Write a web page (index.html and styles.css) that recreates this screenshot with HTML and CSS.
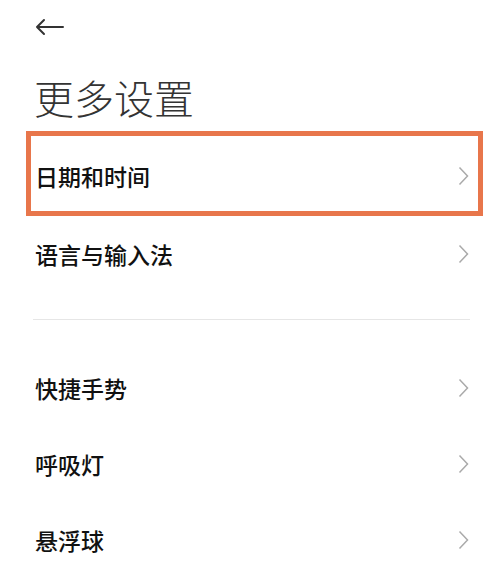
FILE: index.html
```html
<!DOCTYPE html>
<html lang="zh-CN">
<head>
    <meta charset="UTF-8">
    <title>更多设置</title>
    <link rel="stylesheet" href="styles.css">
</head>
<body>
<div class="page">
    <div class="topbar">
        <svg class="back" width="30" height="18" viewBox="0 0 30 18">
            <path d="M2 9 H28 M9 2 L2 9 L9 16" fill="none" stroke="#333" stroke-width="2" stroke-linecap="round" stroke-linejoin="round"/>
        </svg>
    </div>
    <h1 class="title">更多设置</h1>

    <div class="row selected">
        <span class="label">日期和时间</span>
        <svg class="chev" width="11" height="20" viewBox="0 0 11 20"><polyline points="1.5,1.5 9.5,10 1.5,18.5" fill="none" stroke="#aaa" stroke-width="1.5"/></svg>
    </div>
    <div class="row">
        <span class="label">语言与输入法</span>
        <svg class="chev" width="11" height="20" viewBox="0 0 11 20"><polyline points="1.5,1.5 9.5,10 1.5,18.5" fill="none" stroke="#aaa" stroke-width="1.5"/></svg>
    </div>

    <hr class="divider"/>

    <div class="row">
        <span class="label">快捷手势</span>
        <svg class="chev" width="11" height="20" viewBox="0 0 11 20"><polyline points="1.5,1.5 9.5,10 1.5,18.5" fill="none" stroke="#aaa" stroke-width="1.5"/></svg>
    </div>
    <div class="row">
        <span class="label">呼吸灯</span>
        <svg class="chev" width="11" height="20" viewBox="0 0 11 20"><polyline points="1.5,1.5 9.5,10 1.5,18.5" fill="none" stroke="#aaa" stroke-width="1.5"/></svg>
    </div>
    <div class="row">
        <span class="label">悬浮球</span>
        <svg class="chev" width="11" height="20" viewBox="0 0 11 20"><polyline points="1.5,1.5 9.5,10 1.5,18.5" fill="none" stroke="#aaa" stroke-width="1.5"/></svg>
    </div>
</div>
</body>
</html>
```

FILE: styles.css
```css
body {
    margin: 0;
    background: #fff;
    font-family: "Noto Sans CJK SC", "Noto Sans", sans-serif;
    color: #111;
}

.page {
    display: flex;
    flex-direction: column;
}

.topbar {
    height: 18px;
    padding: 18px 0 0 35px;
}
.back {
    display: block;
}

.title {
    margin: 41px 0 0 34px;
    font-size: 40px;
    line-height: 40px;
    height: 54px;
    font-weight: 300;
    color: #333;
}

.row {
    display: flex;
    align-items: center;
    justify-content: space-between;
    height: 76px;
    padding: 0 31px 0 35px;
}

.row.selected {
    margin: 0 17px 0 26px;
    padding: 5px 9px 0 4px;
    border: 5px solid #e8764b;
    height: 70px;
}

.label {
    font-size: 23px;
    font-weight: 500;
    line-height: 26px;
}

.chev {
    display: block;
}

.divider {
    margin: 27px 30px 30px 33px;
    border: none;
    border-top: 1px solid #e6e6e6;
    height: 0;
}
```
